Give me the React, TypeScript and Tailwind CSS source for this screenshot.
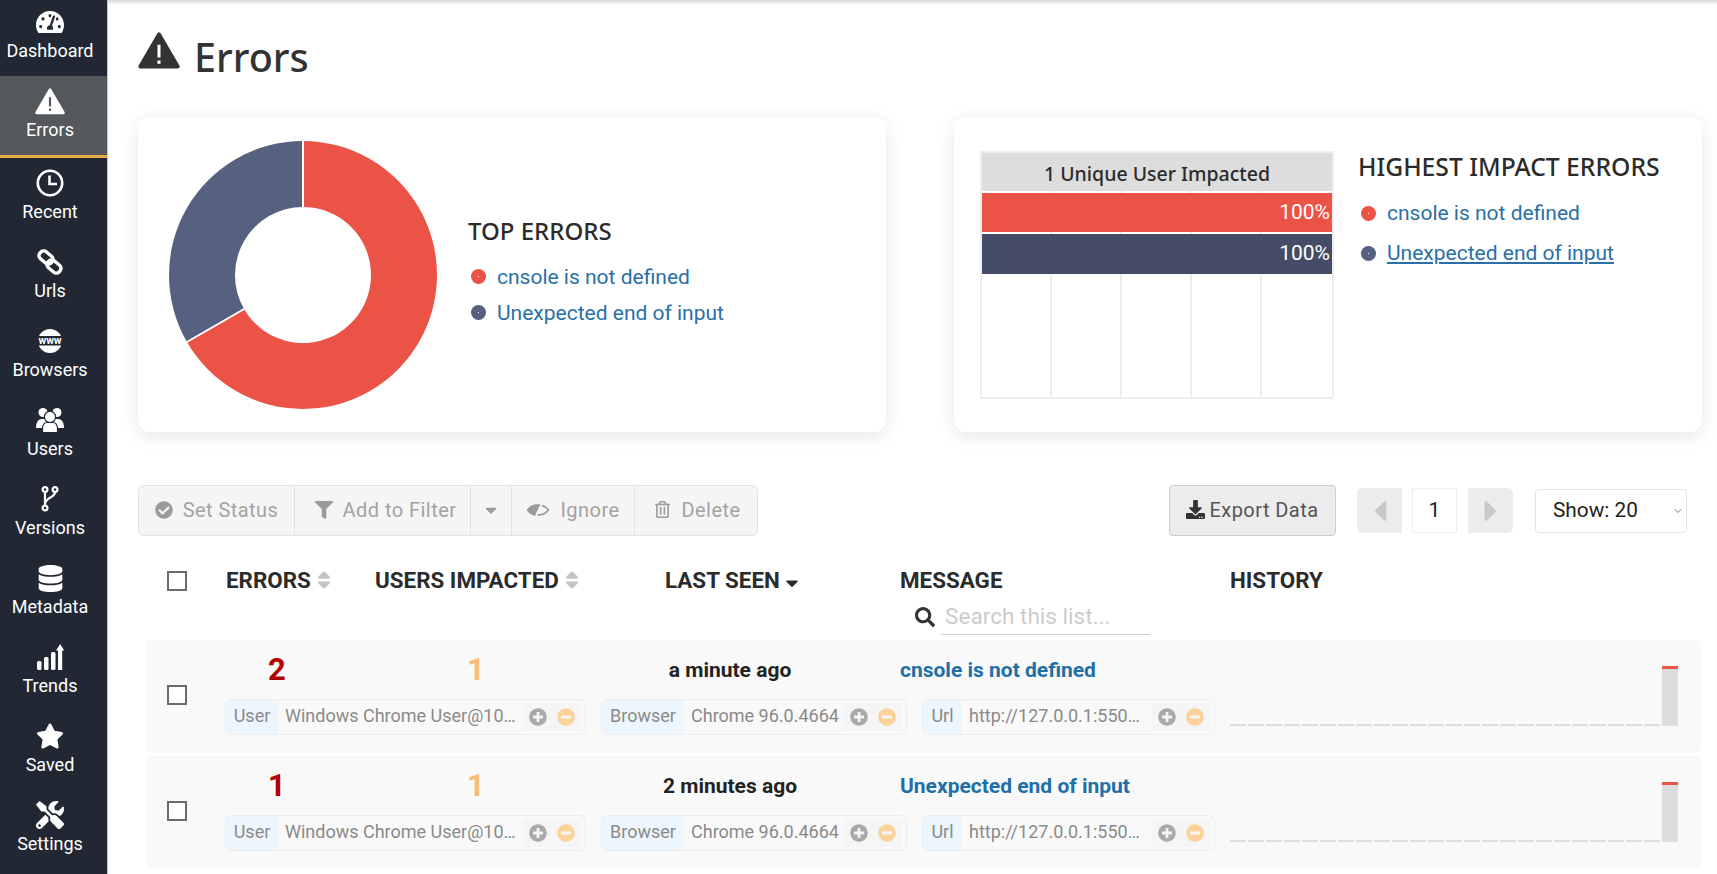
import type { ReactNode } from 'react';
import {
  FaCaretDown,
  FaCaretLeft,
  FaCaretRight,
  FaCheckCircle,
  FaDatabase,
  FaDownload,
  FaFilter,
  FaMinusCircle,
  FaPlusCircle,
  FaRegTrashAlt,
  FaSearch,
  FaSort,
  FaStar,
  FaTachometerAlt,
  FaTools,
} from 'react-icons/fa';
import { ChevronDown } from 'lucide-react';

function WarningIcon({ size, color, mark }: { size: number; color: string; mark: string }) {
  return (
    <svg width={size} height={size} viewBox="0 0 28 28" aria-hidden="true">
      <path d="M14 3.5L26.5 25H1.5Z" fill={color} stroke={color} strokeWidth="2.5" strokeLinejoin="round" />
      <rect x="13" y="10.5" width="2" height="8.5" fill={mark} />
      <rect x="13" y="21" width="2" height="2.2" fill={mark} />
    </svg>
  );
}

function ClockIcon() {
  return (
    <svg width="28" height="28" viewBox="0 0 28 28" fill="none" stroke="#fff" strokeWidth="2.6" aria-hidden="true">
      <circle cx="14" cy="14" r="12.2" />
      <path d="M13.5 6.5V15H21" />
    </svg>
  );
}

function ChainIcon() {
  return (
    <svg width="28" height="28" viewBox="0 0 28 28" fill="none" stroke="#fff" strokeWidth="3.4" aria-hidden="true">
      <rect x="2.5" y="5" width="15" height="9" rx="4" transform="rotate(40 10 9.5)" />
      <rect x="10.5" y="14" width="15" height="9" rx="4" transform="rotate(40 18 18.5)" />
    </svg>
  );
}

function WwwIcon() {
  return (
    <svg width="28" height="28" viewBox="0 0 28 28" aria-hidden="true">
      <circle cx="14" cy="14" r="12" fill="#fff" />
      <rect x="0" y="9" width="28" height="9.5" fill="#212833" />
      <text x="14" y="17.3" textAnchor="middle" fill="#fff" fontSize="10.5" fontWeight="700" fontFamily="Roboto, sans-serif">
        www
      </text>
    </svg>
  );
}

function UsersIcon() {
  return (
    <svg width="28" height="26" viewBox="0 0 28 26" fill="#fff" aria-hidden="true">
      <circle cx="7" cy="5.5" r="4.5" />
      <circle cx="21" cy="5.5" r="4.5" />
      <path d="M0 21c0-6 2.5-9 6-9h16c3.500 0 6 3 6 9z" />
      <circle cx="14" cy="10" r="5.6" stroke="#212833" strokeWidth="1.2" />
      <path d="M6.500 25.500V22c0-4.500 2.500-6.500 5-6.500h5c2.500 0 5 2 5 6.500v3.500z" stroke="#212833" strokeWidth="1.2" />
    </svg>
  );
}

function ForkIcon() {
  return (
    <svg width="18" height="26" viewBox="0 0 18 26" fill="none" stroke="#fff" strokeWidth="2.2" aria-hidden="true">
      <circle cx="4" cy="3.5" r="2.4" />
      <circle cx="14" cy="3.5" r="2.4" />
      <circle cx="4" cy="22" r="2.4" />
      <path d="M4 6V19.500M14 6C14 12 4.500 11 4 18" />
    </svg>
  );
}

function TrendsIcon() {
  return (
    <svg width="28" height="28" viewBox="0 0 28 28" fill="#fff" aria-hidden="true">
      <rect x="1" y="18" width="4.500" height="9" rx="1.500" />
      <rect x="8" y="14" width="4.500" height="13" rx="1.500" />
      <rect x="15" y="9" width="4.500" height="18" rx="1.500" />
      <path d="M22 27V7.500h-2L24.200 1l4 6.500h-2V27z" />
    </svg>
  );
}

function EyeSlashIcon() {
  return (
    <svg width="24" height="20" viewBox="0 0 22 18" aria-hidden="true">
      <path d="M1.500 9C5.500 3 16.500 3 20.500 9C16.500 15 5.500 15 1.500 9Z" fill="none" stroke="#9b9b9b" strokeWidth="1.500" />
      <path d="M1.500 9C4.500 4.500 9.500 3.500 14 4.500L8 14.500C5.500 13.800 3 11.500 1.500 9Z" fill="#9b9b9b" />
      <path d="M15.500 1L8 17" stroke="#f5f5f5" strokeWidth="1.800" />
    </svg>
  );
}

const navItems: { label: string; icon: ReactNode; active?: boolean }[] = [
  { label: 'Dashboard', icon: <FaTachometerAlt size={28} /> },
  { label: 'Errors', icon: <WarningIcon size={30} color="#ffffff" mark="#54575c" />, active: true },
  { label: 'Recent', icon: <ClockIcon /> },
  { label: 'Urls', icon: <ChainIcon /> },
  { label: 'Browsers', icon: <WwwIcon /> },
  { label: 'Users', icon: <UsersIcon /> },
  { label: 'Versions', icon: <ForkIcon /> },
  { label: 'Metadata', icon: <FaDatabase size={27} /> },
  { label: 'Trends', icon: <TrendsIcon /> },
  { label: 'Saved', icon: <FaStar size={28} /> },
  { label: 'Settings', icon: <FaTools size={28} /> },
];

function Sidebar() {
  return (
    <nav className="w-[108px] shrink-0 bg-[#212833] border-r border-[#c8c8c8] overflow-hidden">
      <div className="-mt-[3px]">
        {navItems.map((item) => (
          <div
            key={item.label}
            className={
              item.active
                ? 'h-[82px] pt-[10px] pr-[7px] flex flex-col items-center text-white bg-[#54575c] border-b-[3px] border-[#e5ae45]'
                : 'h-[79px] pt-[10px] pr-[7px] flex flex-col items-center text-white'
            }
          >
            <div className="h-[30px] flex items-center justify-center">{item.icon}</div>
            <div className="h-[28px] leading-[28px] text-[18px]">{item.label}</div>
          </div>
        ))}
      </div>
    </nav>
  );
}

function LegendRow({ color, label, underline }: { color: string; label: string; underline?: boolean }) {
  return (
    <div className="flex items-center">
      <span className="ml-[3px] w-[15px] h-[15px] rounded-full flex items-center justify-center" style={{ backgroundColor: color }}>
        <span className="w-px h-px bg-white" />
      </span>
      <span className={underline ? 'ml-[11px] text-[21px] leading-[28px] text-[#2a6fa8] underline' : 'ml-[11px] text-[21px] leading-[28px] text-[#2a6fa8]'}>
        {label}
      </span>
    </div>
  );
}

function Donut() {
  return (
    <svg width="270" height="270" viewBox="-135 -135 270 270" aria-hidden="true">
      <path d="M0 -134A134 134 0 1 1 -116.050 67L-58.900 34A68 68 0 1 0 0 -68Z" fill="#eb5346" />
      <path d="M-116.050 67A134 134 0 0 1 0 -134V-68A68 68 0 0 0 -58.900 34Z" fill="#56607f" />
      <path d="M0 -135V-67M-117 67.500L-58 33.500" stroke="#fff" strokeWidth="2" fill="none" />
    </svg>
  );
}

function BarChart() {
  return (
    <div className="w-[354px] h-[248px] border-2 border-[#eeeeee] relative flex flex-col">
      <div className="absolute inset-0 grid grid-cols-5">
        {[0, 1, 2, 3, 4].map((i) => (
          <div key={i} className={i < 4 ? 'border-r-2 border-[#eeeeee]' : ''} />
        ))}
      </div>
      <div className="relative h-[38px] pt-[3px] bg-[#dddddd] flex items-center justify-center font-['Noto_Sans',sans-serif] font-medium text-[19.5px] text-[#2b2b2b]">
        1 Unique User Impacted
      </div>
      <div className="relative mt-[2px] h-[39px] bg-[#eb5346] flex items-center justify-end pr-[2px] text-white text-[21px]">100%</div>
      <div className="relative mt-[2px] h-[40px] bg-[#454c66] flex items-center justify-end pr-[2px] text-white text-[21px]">100%</div>
    </div>
  );
}

function ToolButton({ icon, label, width, shift = '' }: { icon: ReactNode; label?: string; width: string; shift?: string }) {
  return (
    <div className={`${width} ${shift} h-full pb-[2px] flex items-center justify-center gap-[10px] border-r border-[#e3e3e3] last:border-r-0 text-[#a3a3a3] text-[20px] tracking-[0.45px]`}>
      {icon}
      {label && <span>{label}</span>}
    </div>
  );
}

function HeaderCell({ label, width, sort }: { label: string; width: string; sort?: 'none' | 'down' }) {
  return (
    <div className={`${width} self-start flex items-center gap-[2px] font-bold text-[22.4px] leading-[30px] text-[#2b2b2b]`}>
      <span>{label}</span>
      {sort === 'none' && <FaSort size={22} className="text-[#c4c4c4]" />}
      {sort === 'down' && <FaCaretDown size={20} className="text-[#2b2b2b] mt-[6px]" />}
    </div>
  );
}

function Tag({ label, labelWidth, value, width }: { label: string; labelWidth: string; value: string; width: string }) {
  return (
    <div className={`${width} h-[36px] flex items-stretch border border-[#eeeeee] rounded-[6px] overflow-hidden text-[18px] text-[#8a8a8a]`}>
      <div className={`${labelWidth} pb-[3px] bg-[#edf5fd] flex items-center justify-center shrink-0`}>{label}</div>
      <div className="flex-1 min-w-0 pl-[7px] pb-[3px] flex items-center whitespace-nowrap">{value}</div>
      <div className="my-[3px] mr-[4px] px-[6px] bg-[#f5f5f5] flex items-center gap-[10px] shrink-0">
        <FaPlusCircle size={18} className="text-[#a9a9a9]" />
        <FaMinusCircle size={18} className="text-[#fbd29a]" />
      </div>
    </div>
  );
}

function History() {
  const bars = Array.from({ length: 24 });
  return (
    <div className="ml-[15px] pt-[26px] h-[86px] flex items-end gap-[2px]">
      {bars.map((_, i) => (
        <div key={i} className="w-[16px] h-[2px] bg-[#dddddd]" />
      ))}
      <div className="w-[16px] h-[60px] bg-[#dddddd] border-t-[3px] border-[#eb5346]" />
    </div>
  );
}

interface ErrorRowProps {
  errors: number;
  users: number;
  lastSeen: string;
  message: string;
}

function ErrorRow({ errors, users, lastSeen, message }: ErrorRowProps) {
  return (
    <div className="ml-[38px] w-[1555px] h-[113px] bg-[#f9f9f9] rounded-[6px] flex">
      <div className="w-[79px] pl-[21px] pt-[45px] shrink-0">
        <input type="checkbox" className="appearance-none block w-[20px] h-[20px] border-2 border-[#6b6b6b] bg-white" />
      </div>
      <div className="w-[990px] shrink-0">
        <div className="h-[59px] pt-[2px] flex items-center">
          <div className="w-[104px] text-center font-bold text-[31px] text-[#b30000]">{errors}</div>
          <div className="w-[294px] text-center font-bold text-[31px] text-[#f5bd72]">{users}</div>
          <div className="w-[214px] text-center font-bold text-[21px] text-[#222222]">{lastSeen}</div>
          <div className="ml-[63px] font-bold text-[21px] text-[#1f6fa8]">{message}</div>
        </div>
        <div className="flex gap-[15px]">
          <Tag label="User" labelWidth="w-[52px]" value="Windows Chrome User@10…" width="w-[361px]" />
          <Tag label="Browser" labelWidth="w-[82px]" value="Chrome 96.0.4664" width="w-[306px]" />
          <Tag label="Url" labelWidth="w-[39px]" value="http://127.0.0.1:550…" width="w-[293px]" />
        </div>
      </div>
      <History />
    </div>
  );
}

export default function App() {
  return (
    <div className="w-[1717px] h-[874px] overflow-hidden flex bg-white font-['Roboto',sans-serif]">
      <Sidebar />
      <main className="flex-1 min-w-0 shadow-[inset_0_5px_4px_-3px_rgba(0,0,0,0.18)]">
        {/* Page title */}
        <div className="ml-[30px] pt-[29px] h-[117px] flex items-start gap-[14px]">
          <WarningIcon size={42} color="#333333" mark="#ffffff" />
          <h1 className="font-['Noto_Sans',sans-serif] font-medium text-[39.5px] leading-[56px] text-[#333333]">Errors</h1>
        </div>

        {/* Chart cards */}
        <div className="ml-[30px] flex gap-[68px]">
          <section className="w-[748px] h-[315px] rounded-[12px] bg-white shadow-[0_4px_18px_rgba(0,0,0,0.1)] flex items-center pl-[30px]">
            <Donut />
            <div className="ml-[30px] -mt-[7px]">
              <h2 className="font-['Noto_Sans',sans-serif] font-medium text-[24px] leading-[30px] text-[#2b2b2b] mb-[17px]">TOP ERRORS</h2>
              <div className="flex flex-col gap-[8px]">
                <LegendRow color="#eb5346" label="cnsole is not defined" />
                <LegendRow color="#56607f" label="Unexpected end of input" />
              </div>
            </div>
          </section>
          <section className="w-[748px] h-[315px] rounded-[12px] bg-white shadow-[0_4px_18px_rgba(0,0,0,0.1)] flex pl-[26px] pt-[34px]">
            <BarChart />
            <div className="ml-[24px]">
              <h2 className="-mt-[1px] font-['Noto_Sans',sans-serif] font-medium text-[24.7px] leading-[34px] text-[#2b2b2b] mb-[15px]">HIGHEST IMPACT ERRORS</h2>
              <div className="flex flex-col gap-[12px]">
                <LegendRow color="#eb5346" label="cnsole is not defined" />
                <LegendRow color="#56607f" label="Unexpected end of input" underline />
              </div>
            </div>
          </section>
        </div>

        {/* Toolbar */}
        <div className="ml-[30px] mt-[53px] w-[1549px] h-[51px] flex items-center">
          <div className="w-[620px] h-full flex bg-[#f5f5f5] border border-[#e3e3e3] rounded-[6px]">
            <ToolButton width="w-[156px]" label="Set Status" icon={<FaCheckCircle size={18} className="text-[#9b9b9b]" />} />
            <ToolButton width="w-[176px]" shift="pl-[6px]" label="Add to Filter" icon={<FaFilter size={18} className="text-[#9b9b9b]" />} />
            <ToolButton width="w-[41px]" icon={<FaCaretDown size={18} className="text-[#9b9b9b]" />} />
            <ToolButton width="w-[123px]" label="Ignore" icon={<EyeSlashIcon />} />
            <ToolButton width="w-[122px]" shift="pl-[3px]" label="Delete" icon={<FaRegTrashAlt size={17} className="text-[#9b9b9b]" />} />
          </div>
          <button className="ml-[411px] w-[167px] h-full pb-[2px] flex items-center justify-center gap-[4px] bg-[#ececec] border border-[#cccccc] rounded-[4px] text-[#555555] text-[20px] tracking-[0.45px]">
            <FaDownload size={19} className="text-[#333333]" />
            Export Data
          </button>
          <div className="ml-[21px] flex items-center">
            <div className="w-[45px] h-[45px] bg-[#ececec] rounded-l-[6px] flex items-center justify-center">
              <FaCaretLeft size={34} className="text-[#c8c8c8]" />
            </div>
            <div className="ml-[10px] w-[45px] h-[45px] bg-white border border-[#eeeeee] flex items-center justify-center text-[21px] text-[#222222]">1</div>
            <div className="ml-[11px] w-[45px] h-[45px] bg-[#ececec] rounded-r-[6px] flex items-center justify-center">
              <FaCaretRight size={34} className="text-[#c8c8c8]" />
            </div>
          </div>
          <div className="relative ml-[22px]">
            <select className="appearance-none block w-[152px] h-[44px] pl-[17px] bg-white border border-[#e3e3e3] rounded-[4px] text-[20.8px] text-[#222222]" defaultValue="20">
              <option value="20">Show: 20</option>
            </select>
            <ChevronDown size={12} strokeWidth={2} className="absolute right-[3px] top-[16px] text-[#777777] pointer-events-none" />
          </div>
        </div>

        {/* Column headers */}
        <div className="h-[104px] flex items-start">
          <div className="ml-[59px] pt-[35px] w-[59px] shrink-0">
            <input type="checkbox" className="appearance-none block w-[20px] h-[20px] border-2 border-[#6b6b6b] bg-white" />
          </div>
          <div className="pt-[29px] flex">
            <HeaderCell label="ERRORS" width="w-[149px]" sort="none" />
            <HeaderCell label="USERS IMPACTED" width="w-[290px]" sort="none" />
            <HeaderCell label="LAST SEEN" width="w-[235px]" sort="down" />
            <div className="w-[330px]">
              <HeaderCell label="MESSAGE" width="w-full" />
              <div className="ml-[15px] mt-[4px] flex items-center gap-[6px]">
                <FaSearch size={20} className="text-[#333333]" />
                <input
                  placeholder="Search this list..."
                  className="w-[209px] h-[36px] pl-[4px] border-b border-[#cccccc] text-[22.6px] placeholder:text-[#cccccc] outline-none"
                />
              </div>
            </div>
            <HeaderCell label="HISTORY" width="w-[120px]" />
          </div>
        </div>

        {/* Error rows */}
        <div className="flex flex-col gap-[3px]">
          <ErrorRow errors={2} users={1} lastSeen="a minute ago" message="cnsole is not defined" />
          <ErrorRow errors={1} users={1} lastSeen="2 minutes ago" message="Unexpected end of input" />
        </div>
      </main>
    </div>
  );
}
